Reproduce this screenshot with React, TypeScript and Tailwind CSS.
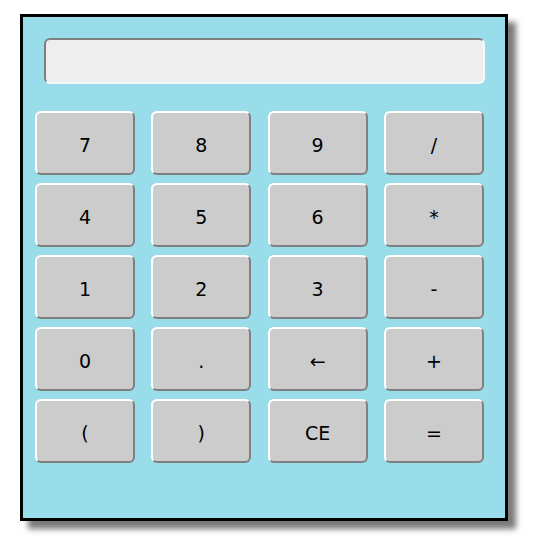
export default function App() {
  const keys = ["7", "8", "9", "/", "4", "5", "6", "*", "1", "2", "3", "-", "0", ".", "←", "+", "(", ")", "CE", "="];
  return (
    <div className="w-[543px] h-[557px] bg-white relative" style={{ fontFamily: "'DejaVu Sans', Verdana, sans-serif" }}>
      <div className="absolute left-[20px] top-[14px] w-[488px] h-[507px] bg-[#98dde9] border-[3px] border-black shadow-[8px_8px_6px_#7a7a7a] pt-[21px] pl-[12px]">
        <div className="ml-[9px] w-[441px] h-[46px] bg-[#eeeeee] rounded-[6px] border-2 border-t-[#7f7f7f] border-l-[#7f7f7f] border-r-[#f8f8f8] border-b-[#f8f8f8]"></div>
        <div className="mt-[27px] w-[449px] grid grid-cols-4 gap-x-[16.33px] gap-y-[8px]">
          {keys.map((k) => (
            <div
              key={k}
              className="h-[64px] pt-[5px] bg-[#cccccc] rounded-[6px] border-2 border-t-white border-l-white border-r-[#808080] border-b-[#808080] flex items-center justify-center text-[19px] leading-none text-black"
            >
              {k}
            </div>
          ))}
        </div>
      </div>
    </div>
  );
}
